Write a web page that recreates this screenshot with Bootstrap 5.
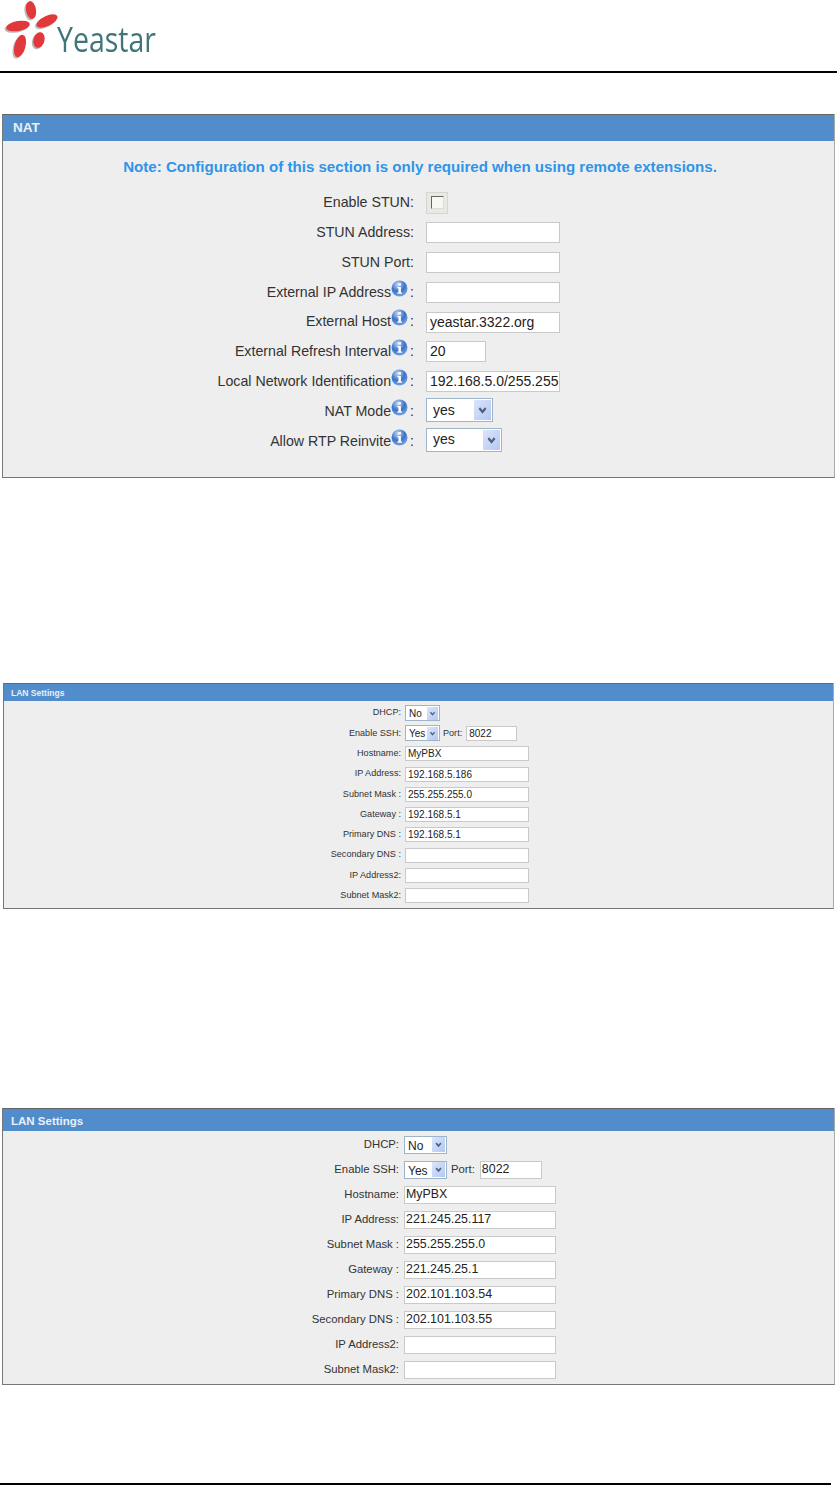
<!DOCTYPE html>
<html lang="en">
<head>
<meta charset="utf-8">
<title>Yeastar NAT and LAN settings</title>
<link rel="stylesheet" href="https://cdn.jsdelivr.net/npm/bootstrap@5.3.0/dist/css/bootstrap.min.css">
<style>
html,body{background:#fff;font-family:"Liberation Sans",Arial,sans-serif;color:#222;margin:0}
.sheet{width:837px;height:1485px;display:flex;flex-direction:column;overflow:hidden}
.brandbar{height:73px;border-bottom:2px solid #000;flex:none}
.brandbar svg{display:block}
.brandtext{font-family:"Open Sans",sans-serif;font-size:34px;fill:#3f7579}
.pane{background:#eee;border-left:1px solid #777;border-right:1px solid #aaa;border-bottom:1px solid #777;flex:none}
.panehead{background:#528dcb;color:#e9f0f8;font-weight:700;border-top:1px solid #666}
.formrow{display:flex;align-items:center}
.formrow label{text-align:right;flex:none;white-space:nowrap;margin:0;color:#333}
.fieldbox{border:1px solid #c9c9c9;border-radius:0;background:#fff;color:#222;padding:0 0 0 3px;box-shadow:none;display:block;min-height:0}
.pickbox{appearance:none;-webkit-appearance:none;border:1px solid #9db4c9;border-radius:0;background-color:#fff;color:#222;display:block;padding:0 0 0 6px;min-height:0;background-repeat:no-repeat;background-image:url("data:image/svg+xml,%3Csvg xmlns='http://www.w3.org/2000/svg' viewBox='0 0 16 16' preserveAspectRatio='none'%3E%3Cdefs%3E%3ClinearGradient id='g' x1='0' y1='0' x2='1' y2='1'%3E%3Cstop offset='0' stop-color='%23dbe5fa'/%3E%3Cstop offset='1' stop-color='%23b5c8f2'/%3E%3C/linearGradient%3E%3C/defs%3E%3Crect width='16' height='16' fill='url(%23g)'/%3E%3Cpath d='M5 6.500l3 3 3-3' fill='none' stroke='%234d6185' stroke-width='2'/%3E%3C/svg%3E");background-position:right 1px center}
.infodot{display:inline-block;vertical-align:0;width:17px;height:17px;margin-top:-6px;margin-right:2px}

/* NAT */
.pane-a{margin:41px 2px 0 2px}
.pane-a .panehead{height:27px;font-size:13.5px;line-height:26px;padding-left:10px}
.pane-a .panebody{height:336px;padding-top:18px}
.notice{color:#2f95e8;font-weight:700;font-size:15.1px;text-align:center;height:29px;line-height:16px;padding-left:3px}
.pane-a .formrow{height:29.8px;font-size:14.2px}
.pane-a label{width:411px;margin-right:12px}
.pane-a .fieldbox{width:134px;height:21px;font-size:14px}
.pane-a .fieldbox.shortbox{width:60px}
.pane-a .pickbox{height:24px;font-size:14px;background-size:17px 20px}
.pane-a .nm{width:67px;margin-bottom:2px}
.pane-a .rt{width:76px;margin-bottom:3px}
.stun{width:22px;height:22px;background:#e9e9e4;border:1px solid #d6d6d0;display:flex;align-items:center;justify-content:center}
.stun input{appearance:none;-webkit-appearance:none;width:13px;height:13px;margin:0;background:#f8f8f0;border:1px solid;border-color:#666 #ddd #ddd #666;display:block}

/* LAN small */
.pane-b{margin:205px 3px 0 3px}
.pane-b .panehead{height:18px;font-size:8.5px;line-height:18px;padding-left:7px}
.pane-b .panebody{height:207px;padding-top:2px}
.pane-b .formrow{height:20.3px;font-size:9.1px}
.pane-b label{width:397px;margin-right:4px}
.pane-b .fieldbox{width:124px;height:15px;font-size:10px;padding-left:2px}
.pane-b .fieldbox.portbox{width:51px;margin-left:4px}
.pane-b .pickbox{height:16px;width:35px;font-size:10px;padding-left:3px;background-size:11px 13px}
.pane-b .portlabel{margin-left:3px;color:#333}

/* LAN large */
.pane-c{margin:199px 2px 0 2px}
.pane-c .panehead{height:23px;font-size:11.5px;line-height:24px;padding-left:8px}
.pane-c .panebody{height:253px;padding-top:1px}
.pane-c .formrow{height:25px;font-size:11.3px}
.pane-c label{width:396px;margin-right:5px}
.pane-c .fieldbox{width:152px;height:18px;font-size:12.4px;padding-left:1px}
.pane-c .fieldbox.portbox{width:62px;margin-left:5px}
.pane-c .pickbox{height:18px;width:43px;font-size:12px;padding-left:3px;background-size:13px 15px}
.pane-c .portlabel{margin-left:4px;color:#333}

.pagefoot{margin-top:auto;border-bottom:2px solid #000;height:1px;flex:none;margin-right:6px}
</style>
</head>
<body>
<div class="sheet">
  <header class="brandbar">
    <svg width="200" height="62" viewBox="0 0 200 62" role="img" aria-label="Yeastar logo">
      <defs><filter id="soft" x="-20%" y="-20%" width="140%" height="140%"><feGaussianBlur stdDeviation=".55"/></filter></defs>
      <g filter="url(#soft)">
        <g fill="#b9b9b9" transform="translate(-1.500 1.500)">
          <ellipse cx="31" cy="10" rx="5" ry="9" transform="rotate(-10 31 10)"/>
          <ellipse cx="47" cy="21" rx="11.500" ry="5" transform="rotate(-25 47 21)"/>
          <ellipse cx="18" cy="26" rx="12" ry="5" transform="rotate(-10 18 26)"/>
          <ellipse cx="20" cy="46" rx="5.500" ry="11.500" transform="rotate(15 20 46)"/>
          <ellipse cx="39" cy="40" rx="5.500" ry="8" transform="rotate(15 39 40)"/>
        </g>
        <g fill="#e0393a">
          <ellipse cx="31" cy="10" rx="5" ry="9" transform="rotate(-10 31 10)"/>
          <ellipse cx="47" cy="21" rx="11.500" ry="5" transform="rotate(-25 47 21)"/>
          <ellipse cx="18" cy="26" rx="12" ry="5" transform="rotate(-10 18 26)"/>
          <ellipse cx="20" cy="46" rx="5.500" ry="11.500" transform="rotate(15 20 46)"/>
          <ellipse cx="39" cy="40" rx="5.500" ry="8" transform="rotate(15 39 40)"/>
        </g>
      </g>
      <text class="brandtext" x="57" y="52" textLength="99" lengthAdjust="spacingAndGlyphs" filter="url(#soft)">Yeastar</text>
    </svg>
  </header>

  <section class="pane pane-a">
    <div class="panehead">NAT</div>
    <div class="panebody">
      <div class="notice">Note: Configuration of this section is only required when using remote extensions.</div>
      <div class="formrow"><label>Enable STUN:</label><span class="stun"><input type="checkbox" aria-label="Enable STUN"></span></div>
      <div class="formrow"><label>STUN Address:</label><input class="form-control fieldbox" aria-label="STUN Address"></div>
      <div class="formrow"><label>STUN Port:</label><input class="form-control fieldbox" aria-label="STUN Port"></div>
      <div class="formrow"><label>External IP Address<svg class="infodot" viewBox="0 0 16 16"><use href="#inf"/></svg>:</label><input class="form-control fieldbox" aria-label="External IP Address"></div>
      <div class="formrow"><label>External Host<svg class="infodot" viewBox="0 0 16 16"><use href="#inf"/></svg>:</label><input class="form-control fieldbox" value="yeastar.3322.org" aria-label="External Host"></div>
      <div class="formrow"><label>External Refresh Interval<svg class="infodot" viewBox="0 0 16 16"><use href="#inf"/></svg>:</label><input class="form-control fieldbox shortbox" value="20" aria-label="External Refresh Interval"></div>
      <div class="formrow"><label>Local Network Identification<svg class="infodot" viewBox="0 0 16 16"><use href="#inf"/></svg>:</label><input class="form-control fieldbox" value="192.168.5.0/255.255.255.0" aria-label="Local Network Identification"></div>
      <div class="formrow"><label>NAT Mode<svg class="infodot" viewBox="0 0 16 16"><use href="#inf"/></svg>:</label><select class="form-select pickbox nm" aria-label="NAT Mode"><option>yes</option></select></div>
      <div class="formrow"><label>Allow RTP Reinvite<svg class="infodot" viewBox="0 0 16 16"><use href="#inf"/></svg>:</label><select class="form-select pickbox rt" aria-label="Allow RTP Reinvite"><option>yes</option></select></div>
    </div>
  </section>

  <section class="pane pane-b">
    <div class="panehead">LAN Settings</div>
    <div class="panebody">
      <div class="formrow"><label>DHCP:</label><select class="form-select pickbox" aria-label="DHCP"><option>No</option></select></div>
      <div class="formrow"><label>Enable SSH:</label><select class="form-select pickbox" aria-label="Enable SSH"><option>Yes</option></select><span class="portlabel">Port:</span><input class="form-control fieldbox portbox" value="8022" aria-label="Port"></div>
      <div class="formrow"><label>Hostname:</label><input class="form-control fieldbox" value="MyPBX" aria-label="Hostname"></div>
      <div class="formrow"><label>IP Address:</label><input class="form-control fieldbox" value="192.168.5.186" aria-label="IP Address"></div>
      <div class="formrow"><label>Subnet Mask :</label><input class="form-control fieldbox" value="255.255.255.0" aria-label="Subnet Mask"></div>
      <div class="formrow"><label>Gateway :</label><input class="form-control fieldbox" value="192.168.5.1" aria-label="Gateway"></div>
      <div class="formrow"><label>Primary DNS :</label><input class="form-control fieldbox" value="192.168.5.1" aria-label="Primary DNS"></div>
      <div class="formrow"><label>Secondary DNS :</label><input class="form-control fieldbox" aria-label="Secondary DNS"></div>
      <div class="formrow"><label>IP Address2:</label><input class="form-control fieldbox" aria-label="IP Address2"></div>
      <div class="formrow"><label>Subnet Mask2:</label><input class="form-control fieldbox" aria-label="Subnet Mask2"></div>
    </div>
  </section>

  <section class="pane pane-c">
    <div class="panehead">LAN Settings</div>
    <div class="panebody">
      <div class="formrow"><label>DHCP:</label><select class="form-select pickbox" aria-label="DHCP"><option>No</option></select></div>
      <div class="formrow"><label>Enable SSH:</label><select class="form-select pickbox" aria-label="Enable SSH"><option>Yes</option></select><span class="portlabel">Port:</span><input class="form-control fieldbox portbox" value="8022" aria-label="Port"></div>
      <div class="formrow"><label>Hostname:</label><input class="form-control fieldbox" value="MyPBX" aria-label="Hostname"></div>
      <div class="formrow"><label>IP Address:</label><input class="form-control fieldbox" value="221.245.25.117" aria-label="IP Address"></div>
      <div class="formrow"><label>Subnet Mask :</label><input class="form-control fieldbox" value="255.255.255.0" aria-label="Subnet Mask"></div>
      <div class="formrow"><label>Gateway :</label><input class="form-control fieldbox" value="221.245.25.1" aria-label="Gateway"></div>
      <div class="formrow"><label>Primary DNS :</label><input class="form-control fieldbox" value="202.101.103.54" aria-label="Primary DNS"></div>
      <div class="formrow"><label>Secondary DNS :</label><input class="form-control fieldbox" value="202.101.103.55" aria-label="Secondary DNS"></div>
      <div class="formrow"><label>IP Address2:</label><input class="form-control fieldbox" aria-label="IP Address2"></div>
      <div class="formrow"><label>Subnet Mask2:</label><input class="form-control fieldbox" aria-label="Subnet Mask2"></div>
    </div>
  </section>

  <div class="pagefoot"></div>
</div>
<svg width="0" height="0" class="d-block" aria-hidden="true">
  <defs>
    <radialGradient id="ig" cx=".4" cy=".25" r=".85"><stop offset="0" stop-color="#c4d8f5"/><stop offset=".5" stop-color="#3b72c8"/><stop offset="1" stop-color="#86aee4"/></radialGradient>
    <symbol id="inf" viewBox="0 0 16 16">
      <circle cx="8" cy="8" r="7.500" fill="url(#ig)"/>
      <rect x="6.800" y="3" width="2.600" height="2.200" fill="#fff"/>
      <path d="M6 6.600h3.300v5.200h1.100v1.200H5.900v-1.200h1.100V7.800H6z" fill="#fff"/>
    </symbol>
  </defs>
</svg>
<script src="https://cdn.jsdelivr.net/npm/bootstrap@5.3.0/dist/js/bootstrap.bundle.min.js"></script>
</body>
</html>
